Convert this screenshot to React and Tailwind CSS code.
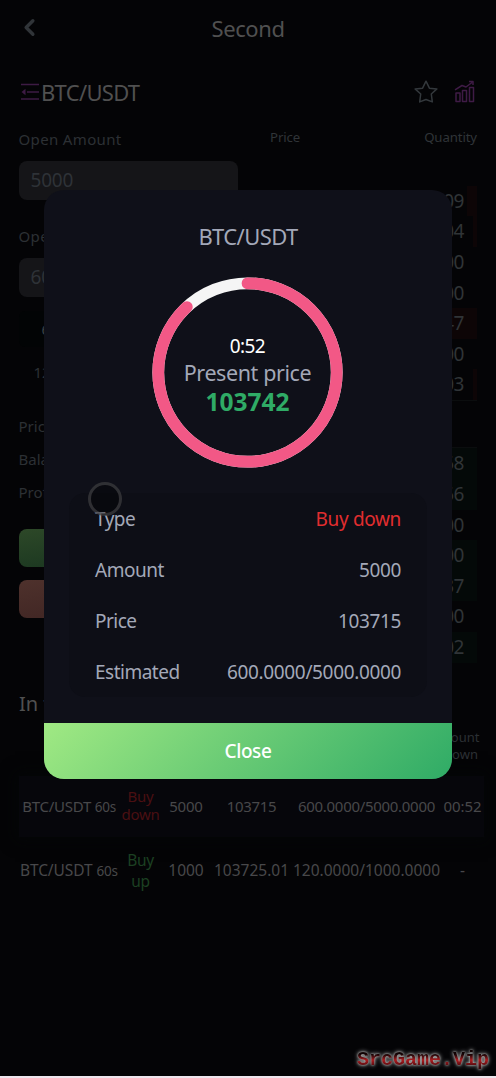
import { ChevronLeft } from 'lucide-react';

const asks = [
  { qty: '09', depth: 'w-[10px]' },
  { qty: '04', depth: 'w-[4px]' },
  { qty: '00', depth: 'w-0' },
  { qty: '00', depth: 'w-0' },
  { qty: '47', depth: 'w-[70px]' },
  { qty: '00', depth: 'w-0' },
  { qty: '03', depth: 'w-[4px]' },
];

const bids = [
  { qty: '58', depth: 'w-[80px]' },
  { qty: '56', depth: 'w-[60px]' },
  { qty: '00', depth: 'w-0' },
  { qty: '00', depth: 'w-[60px]' },
  { qty: '37', depth: 'w-[90px]' },
  { qty: '00', depth: 'w-0' },
  { qty: '02', depth: 'w-[60px]' },
];

const details = [
  { label: 'Type', value: 'Buy down', color: 'text-[#e12d2f]' },
  { label: 'Amount', value: '5000', color: 'text-[#a3a8b8]' },
  { label: 'Price', value: '103715', color: 'text-[#a3a8b8]' },
  { label: 'Estimated', value: '600.0000/5000.0000', color: 'text-[#a3a8b8]' },
];

const Header = () => (
  <header className="relative h-[56px] flex items-center justify-center">
    <ChevronLeft size={27} strokeWidth={3} className="absolute left-[16px] top-[14px] text-[#303438]" />
    <h1 className="text-[22px] tracking-[-0.4px] text-[#505050]">Second</h1>
  </header>
);

const PairBar = () => (
  <div className="h-[72px] pl-[21px] pr-[21px] flex items-center">
    <svg width="18" height="18" viewBox="0 0 18 18" className="text-[#3d1b44]">
      <path d="M0 1.5h18M6 9h12M0 16h18" stroke="currentColor" strokeWidth="1.3" />
      <path d="M4.5 5.8v6.4L.5 9z" fill="currentColor" />
    </svg>
    <h2 className="ml-[2px] text-[22px] leading-[32px] pb-px tracking-[-0.7px] text-[#505050]">BTC/USDT</h2>
    <div className="ml-auto -mt-px flex items-center gap-[16px]">
      <svg width="24" height="24" viewBox="0 0 24 24" fill="none" stroke="#33383c" strokeWidth="1.5" strokeLinejoin="round">
        <path d="M12 1.200l3.400 7 7.500.7-5.600 5.100 1 7.900-6.300-2.400-6.300 2.400 1-7.900-5.600-5.100 7.500-.7z" />
      </svg>
      <svg width="21" height="23" viewBox="0 0 21 23" fill="none" stroke="#3f1b46" strokeWidth="1.5" strokeLinejoin="round">
        <path d="M2 13h4v8.500H2zM8.500 10.500h4v11h-4zM15.500 7.500h4v14h-4z" />
        <path d="M1 9.800l7-4.300 4 1.500 6-4.500M15 1.500h4V5" />
      </svg>
    </div>
  </div>
);

const Field = ({ label, value }) => (
  <div>
    <div className="h-[33px] text-[15px] leading-[22px] tracking-[0.350px] text-[#2c3034]">{label}</div>
    <div className="h-[39px] rounded-[8px] bg-[#151518] px-3 text-[19px] leading-[39px] tracking-[-0.2px] text-[#2e3237]">
      {value}
    </div>
  </div>
);

const TradeForm = () => (
  <div className="w-[219px]">
    <Field label="Open Amount" value="5000" />
    <div className="h-[24.500px]" />
    <Field label="Open" value="60" />
    <div className="mt-[14px] text-[15px] leading-[36px] text-[#3c4044]">
      <div className="w-[105px] h-[36px] rounded-[6px] bg-[#020405] pl-[23px]">60s</div>
    </div>
    <p className="mt-[10px] pl-[15px] text-[15px] leading-[30px] text-[#2c3034]">120s</p>
    <div className="mt-[23.500px] text-[15px] leading-[33px] text-[#2c3034]">
      <p>Price</p>
      <p>Balance</p>
      <p>Profit</p>
    </div>
    <div className="mt-[20px] h-[38px] rounded-[8px] bg-linear-to-br from-[#2d4828] to-[#102e1c]" />
    <div className="mt-[13px] h-[38px] rounded-[8px] bg-linear-to-br from-[#4e312c] to-[#39201f]" />
  </div>
);

const BookRow = ({ qty, depth, tint }) => (
  <div className="h-[30.6px] flex">
    <span className="flex-1 pr-[13px] text-right text-[19px] leading-[31px] tracking-[-0.5px] text-[#303437] -mr-[100px] z-10">
      {qty}
    </span>
    <div className="w-[100px] flex justify-end">
      <div className={`${depth} ${tint}`} />
    </div>
  </div>
);

const OrderBook = () => (
  <div className="w-[207px]">
    <div className="h-[57.800px] flex justify-between text-[13.200px] leading-[19px] tracking-[-0.1px] text-[#303438]">
      <span>Price</span>
      <span>Quantity</span>
    </div>
    {asks.map((row, i) => (
      <BookRow key={i} {...row} tint="bg-[#0d0506]" />
    ))}
    <div className="h-[48.500px] border-y border-[#0b0d0e]" />
    {bids.map((row, i) => (
      <BookRow key={i} {...row} tint="bg-[#040908]" />
    ))}
  </div>
);

const columns = 'grid grid-cols-[101px_41px_50px_81px_149px_43px] items-center text-center';

const Orders = () => (
  <section className="mt-[66px] text-[#48484a]">
    <h3 className="px-[19px] text-[20px] leading-[40px] text-[#505050]">In transaction</h3>
    <div className="h-[51.500px] pr-[11px] flex justify-end items-center text-center text-[13px] leading-[17px] text-[#2c3034]">
      <div className="w-[48px] -mt-[7px]">Count<br />down</div>
    </div>
    <div className={`${columns} ml-[19px] w-[465px] h-[61px] bg-[#06060b] shadow-[0_0_14px_4px_#040607] text-[15px]`}>
      <div className="-ml-px tracking-[-0.250px] whitespace-nowrap">BTC/USDT <small className="text-[13.500px]">60s</small></div>
      <div className="-mx-px -mt-[2px] leading-[18px] tracking-[-0.3px] text-[#4a0f12]">Buy down</div>
      <div className="tracking-[-0.2px]">5000</div>
      <div className="tracking-[-0.3px]">103715</div>
      <div className="tracking-[-0.3px]">600.0000/5000.0000</div>
      <div className="tracking-[-0.1px]">00:52</div>
    </div>
    <div className={`${columns} ml-[19px] w-[465px] h-[68px] text-[15.500px]`}>
      <div className="-ml-px tracking-[-0.1px] whitespace-nowrap">BTC/USDT <small className="text-[13.500px]">60s</small></div>
      <div className="leading-[21px] tracking-[-0.3px] text-[#1c4022]">Buy up</div>
      <div>1000</div>
      <div>103725.01</div>
      <div>120.0000/1000.0000</div>
      <div>-</div>
    </div>
  </section>
);

const Countdown = () => (
  <div className="relative mt-[24px] -ml-px w-[191px] h-[191px]">
    <svg width="191" height="191" viewBox="0 0 192 192" fill="none" strokeWidth="11.8">
      <circle cx="96" cy="96" r="89.700" stroke="#f5f5f5" />
      <circle
        cx="96"
        cy="96"
        r="89.700"
        stroke="#f25886"
        strokeLinecap="round"
        pathLength="1000"
        strokeDasharray="881 1000"
        transform="rotate(-90 96 96)"
      />
    </svg>
    <div className="absolute inset-0 pt-[56px] flex flex-col items-center">
      <span className="text-[19px] leading-[27px] tracking-[-0.6px] text-white">0:52</span>
      <span className="text-[21.500px] leading-[26px] tracking-[-0.4px] text-[#a3a8b8]">Present price</span>
      <span className="text-[24.500px] leading-[31px] font-bold text-[#2fab66]">103742</span>
    </div>
  </div>
);

const OrderModal = () => (
  <div className="absolute inset-x-0 top-[190px] z-20 flex justify-center">
    <div className="w-[408px] h-[589px] rounded-[20px] overflow-hidden bg-[#0f1019] flex flex-col items-center">
      <h2 className="mt-[30px] text-[22px] leading-[33px] tracking-[-0.6px] text-[#a3a8b8]">BTC/USDT</h2>
      <Countdown />
      <div className="mt-[25px] w-[358px] h-[204px] rounded-[16px] bg-[#0d0e16] px-[26px] text-[19px]">
        {details.map((item) => (
          <div key={item.label} className="h-[51px] pt-[2px] flex items-center justify-between">
            <span className="relative z-40 tracking-[-0.5px] text-[#a3a8b8]">{item.label}</span>
            <span className={`tracking-[-0.350px] ${item.color}`}>{item.value}</span>
          </div>
        ))}
      </div>
      <button className="mt-auto w-full h-[56px] pt-px bg-linear-[135deg] from-[#a0e983] to-[#2fab66] text-[19px] font-medium tracking-[-0.4px] text-white">
        Close
      </button>
    </div>
  </div>
);

export default function App() {
  return (
    <div className="relative w-[496px] h-[1078px] overflow-hidden bg-[#040406] border-b-2 border-[#eee5ec] font-['Noto_Sans','Open_Sans',sans-serif]">
      <Header />
      <PairBar />
      <div className="flex justify-between pl-[18.500px] pr-[19px] h-[490px]">
        <TradeForm />
        <OrderBook />
      </div>
      <Orders />
      <OrderModal />
      {/* touch indicator */}
      <div className="absolute z-30 left-[88px] top-[482px] w-[34px] h-[34px] rounded-full border-3 border-[#4a4a4d]/60 bg-black/35" />
      <div className="absolute right-[7px] bottom-[1px] [filter:drop-shadow(0_0_1px_#bbb)_drop-shadow(0_0_2px_#999)]">
        <span className="block bg-linear-to-b from-30% from-[#100304] via-50% via-[#b01c20] to-75% to-[#38070a] bg-clip-text text-transparent font-['Liberation_Mono',monospace] font-bold text-[20px] leading-[30px]">
          SrcGame.Vip
        </span>
      </div>
    </div>
  );
}
